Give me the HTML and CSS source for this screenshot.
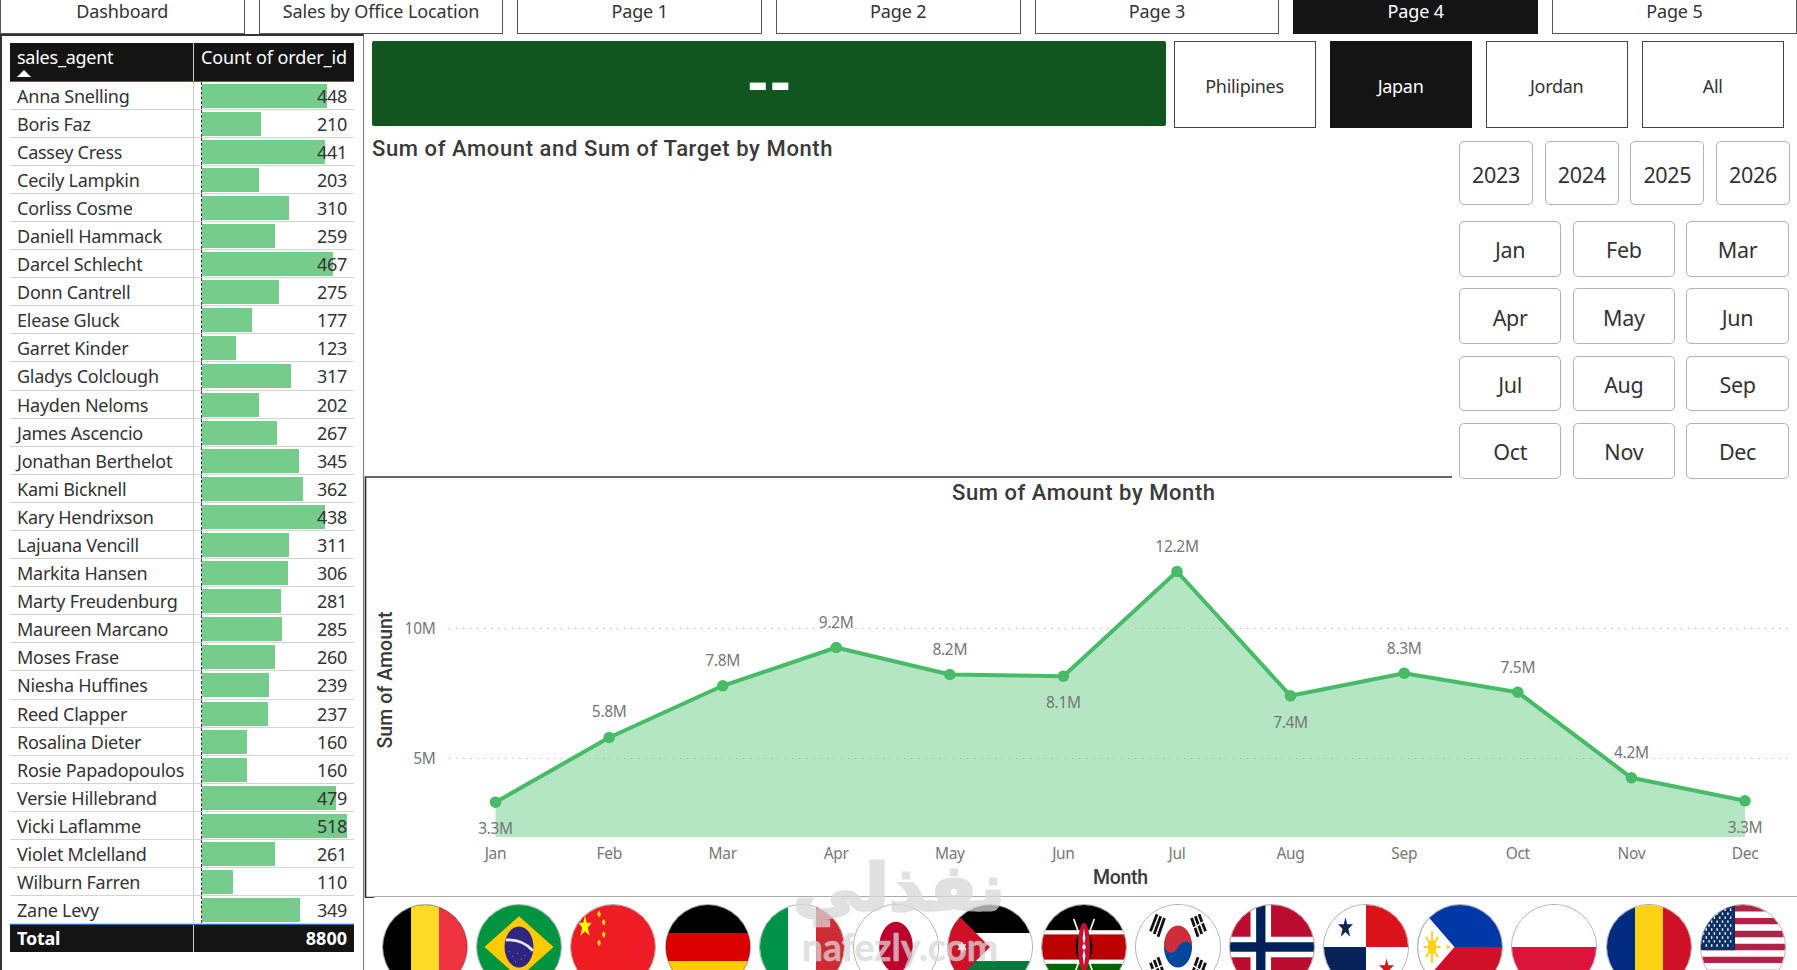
FILE: index.html
```html
<!DOCTYPE html>
<html lang="en">
<head>
  <meta charset="UTF-8" />
  <title>Sales Dashboard</title>
  <link rel="stylesheet" href="styles.css">
</head>
<body>
  <nav class="tabs">
    <a class="tab">Dashboard</a>
    <a class="tab">Sales by Office Location</a>
    <a class="tab">Page 1</a>
    <a class="tab">Page 2</a>
    <a class="tab">Page 3</a>
    <a class="tab active">Page 4</a>
    <a class="tab">Page 5</a>
  </nav>

  <div class="page">
    <aside class="agents">
      <div class="agents-head">
        <div class="name">sales_agent<span class="sort"></span></div>
        <div class="count">Count of order_id</div>
      </div>
      <div id="rows"></div>
      <div class="agents-total">
        <div class="name">Total</div>
        <div class="count">8800</div>
      </div>
    </aside>

    <main class="content">
      <div class="top-row">
        <div class="card">--</div>
        <div class="countries">
          <button class="country">Philipines</button>
          <button class="country active">Japan</button>
          <button class="country">Jordan</button>
          <button class="country">All</button>
        </div>
      </div>

      <div class="middle-row">
        <div class="combo-chart">
          <h2>Sum of Amount and Sum of Target by Month</h2>
        </div>
        <div class="slicers">
          <div class="years">
            <button>2023</button>
            <button>2024</button>
            <button>2025</button>
            <button>2026</button>
          </div>
          <div class="months">
            <button>Jan</button>
            <button>Feb</button>
            <button>Mar</button>
            <button>Apr</button>
            <button>May</button>
            <button>Jun</button>
            <button>Jul</button>
            <button>Aug</button>
            <button>Sep</button>
            <button>Oct</button>
            <button>Nov</button>
            <button>Dec</button>
          </div>
        </div>
      </div>

      <svg class="area-chart" width="1433" height="422" viewBox="364 476 1433 422">
        <path class="frame" d="M1452 477H365.5V897.5H374" />
        <path class="frame-light" d="M374 896.5H1797" />
        <text class="title" x="952" y="500" textLength="263">Sum of Amount by Month</text>
        <polygon class="area" points="495.5,837 495.5,802.2 609.2,737.5 722.7,685.8 836.2,647.5 949.8,674.5 1063.4,676.2 1177,571.5 1290.5,695.8 1404.2,673.2 1517.8,692.2 1631.4,777.8 1745,800.8 1745,837" />
        <path class="grid" d="M449 628.5H1788M449 758.5H1788" />
        <polyline class="line" points="495.5,802.2 609.2,737.5 722.7,685.8 836.2,647.5 949.8,674.5 1063.4,676.2 1177,571.5 1290.5,695.8 1404.2,673.2 1517.8,692.2 1631.4,777.8 1745,800.8" />
        <g class="dots">
          <circle cx="495.5" cy="802.2" r="5.8" />
          <circle cx="609.2" cy="737.5" r="5.8" />
          <circle cx="722.7" cy="685.8" r="5.8" />
          <circle cx="836.2" cy="647.5" r="5.8" />
          <circle cx="949.8" cy="674.5" r="5.8" />
          <circle cx="1063.4" cy="676.2" r="5.8" />
          <circle cx="1177" cy="571.5" r="5.8" />
          <circle cx="1290.5" cy="695.8" r="5.8" />
          <circle cx="1404.2" cy="673.2" r="5.8" />
          <circle cx="1517.8" cy="692.2" r="5.8" />
          <circle cx="1631.4" cy="777.8" r="5.8" />
          <circle cx="1745" cy="800.8" r="5.8" />
        </g>
        <g class="labels">
          <text x="495.5" y="834">3.3M</text>
          <text x="609.2" y="717">5.8M</text>
          <text x="722.7" y="666">7.8M</text>
          <text x="836.2" y="628">9.2M</text>
          <text x="949.8" y="654.5">8.2M</text>
          <text x="1063.4" y="708">8.1M</text>
          <text x="1177" y="551.5">12.2M</text>
          <text x="1290.5" y="727.5">7.4M</text>
          <text x="1404.2" y="653.5">8.3M</text>
          <text x="1517.8" y="672.5">7.5M</text>
          <text x="1631.4" y="758">4.2M</text>
          <text x="1745" y="833">3.3M</text>
        </g>
        <g class="axis">
          <text x="495.5" y="858.5">Jan</text>
          <text x="609.2" y="858.5">Feb</text>
          <text x="722.7" y="858.5">Mar</text>
          <text x="836.2" y="858.5">Apr</text>
          <text x="949.8" y="858.5">May</text>
          <text x="1063.4" y="858.5">Jun</text>
          <text x="1177" y="858.5">Jul</text>
          <text x="1290.5" y="858.5">Aug</text>
          <text x="1404.2" y="858.5">Sep</text>
          <text x="1517.8" y="858.5">Oct</text>
          <text x="1631.4" y="858.5">Nov</text>
          <text x="1745" y="858.5">Dec</text>
          <text class="end" x="435.5" y="634">10M</text>
          <text class="end" x="435.5" y="764">5M</text>
        </g>
        <text class="axis-title" x="1093" y="884" textLength="55">Month</text>
        <text class="axis-title" transform="translate(391.5 748.5) rotate(-90)" textLength="137">Sum of Amount</text>
      </svg>

      <div class="flags">
        <!-- Belgium -->
        <svg class="flag" viewBox="0 0 90 90">
          <rect width="90" height="90" fill="#000" />
          <rect x="30" width="30" height="90" fill="#fdda24" />
          <rect x="60" width="30" height="90" fill="#ef3340" />
        </svg>
        <!-- Brazil -->
        <svg class="flag" viewBox="0 0 90 90">
          <rect width="90" height="90" fill="#009440" />
          <path d="M45 12L82 45L45 78L8 45Z" fill="#ffcb00" />
          <ellipse cx="45" cy="45" rx="15.500" ry="22" fill="#302681" />
          <path d="M31 37.500Q48 36 60 49" fill="none" stroke="#dfe8f0" stroke-width="3" />
          <path d="M34 50h1M38 55h1M43 52h1M47 58h1M51 54h1M41 61h1" stroke="#aab" stroke-width="1" />
        </svg>
        <!-- China -->
        <svg class="flag" viewBox="0 0 90 90">
          <rect width="90" height="90" fill="#ee1c25" />
          <path d="M15 11L16.800 19H22L18 24.500L20 33L15 28L10 33L12 24.500L8 19H13.200Z" fill="#ff0" />
          <path d="M30 6l2 3-1 4-2-1-1-3zM35 15l2 3-1 4-2-1-1-3zM35 28l2 3-1 4-2-1-1-3zM30 37l2 3-1 4-2-1-1-3z" fill="#ffde00" />
        </svg>
        <!-- Germany -->
        <svg class="flag" viewBox="0 0 90 90">
          <rect width="90" height="90" fill="#000" />
          <rect y="30" width="90" height="30" fill="#d00" />
          <rect y="60" width="90" height="30" fill="#ffce00" />
        </svg>
        <!-- Italy -->
        <svg class="flag" viewBox="0 0 90 90">
          <rect width="90" height="90" fill="#fff" />
          <rect width="30" height="90" fill="#009246" />
          <rect x="60" width="30" height="90" fill="#ce2b37" />
        </svg>
        <!-- Japan -->
        <svg class="flag" viewBox="0 0 90 90">
          <rect width="90" height="90" fill="#fff" />
          <ellipse cx="45" cy="45" rx="18" ry="27" fill="#bc002d" />
        </svg>
        <!-- Jordan -->
        <svg class="flag" viewBox="0 0 90 90">
          <rect width="90" height="90" fill="#fff" />
          <rect width="90" height="30" fill="#000" />
          <rect y="60" width="90" height="30" fill="#007a3d" />
          <path d="M0 0L45 45L0 90Z" fill="#ce1126" />
          <path d="M15 39l1.500 3.500 3-1-1.500 3.500 2 3-3.500 0-1.500 4-1.500-4-3.500 0 2-3-1.500-3.500 3 1z" fill="#fff" />
        </svg>
        <!-- Kenya -->
        <svg class="flag" viewBox="0 0 90 90">
          <rect width="90" height="90" fill="#fff" />
          <rect width="90" height="27" fill="#000" />
          <rect y="31.500" width="90" height="27" fill="#b00" />
          <rect y="63" width="90" height="27" fill="#060" />
          <path d="M34 15L56 76M56 15L34 76" stroke="#fff" stroke-width="1.800" />
          <ellipse cx="45" cy="45" rx="9" ry="17" fill="#000" />
          <ellipse cx="45" cy="45" rx="6.500" ry="26" fill="#c8102e" />
          <path d="M45 25L46.500 36L45 42L43.500 36ZM45 48L46.500 54L45 65L43.500 54Z" fill="#fff" />
          <ellipse cx="45" cy="45" rx="1.800" ry="3" fill="#fff" />
        </svg>
        <!-- South Korea -->
        <svg class="flag" viewBox="0 0 90 90">
          <rect width="90" height="90" fill="#fff" />
          <ellipse cx="45" cy="45" rx="15" ry="22" fill="#0047a0" />
          <path d="M30 44A15 22 0 0 1 60 44C59 38 49 37 45 45C41 54 33 53 30 44Z" fill="#cd2e3a" />
          <g stroke="#111" stroke-width="3">
            <path d="M22.500 10L15.500 28M26.500 12L19.500 31M30.500 14L23.500 34" />
            <path d="M67.500 10L74.500 28M63.500 12L70.500 31M59.500 14L66.500 34" />
            <path d="M22.500 80L15.500 62M26.500 78L19.500 59M30.500 76L23.500 56" />
            <path d="M67.500 80L74.500 62M63.500 78L70.500 59M59.500 76L66.500 56" />
          </g>
          <path d="M61 25L74 17M61 65L74 73M16 70L30 64" stroke="#fff" stroke-width="1.500" />
        </svg>
        <!-- Norway -->
        <svg class="flag" viewBox="0 0 90 90">
          <rect width="90" height="90" fill="#ba0c2f" />
          <path d="M33 0V90M0 45H90" stroke="#fff" stroke-width="22" />
          <path d="M33 0V90M0 45H90" stroke="#00205b" stroke-width="10" />
        </svg>
        <!-- Panama -->
        <svg class="flag" viewBox="0 0 90 90">
          <rect width="90" height="90" fill="#fff" />
          <rect x="45" width="45" height="45" fill="#da121a" />
          <rect y="45" width="45" height="45" fill="#072357" />
          <path d="M23 13L24.800 20.500H31L26.200 25.500L28 34L23 29L18 34L19.800 25.500L15 20.500H21.200Z" fill="#072357" />
          <path d="M67 57L68.800 64.500H75L70.200 69.500L72 78L67 73L62 78L63.800 69.500L59 64.500H65.200Z" fill="#da121a" />
        </svg>
        <!-- Philippines -->
        <svg class="flag" viewBox="0 0 90 90">
          <rect width="90" height="45" fill="#0038a8" />
          <rect y="45" width="90" height="45" fill="#ce1126" />
          <path d="M0 0L39 45L0 90Z" fill="#fff" />
          <path d="M15 28V62M6 45H24M8.500 34L21.500 56M21.500 34L8.500 56" stroke="#fcd116" stroke-width="2" />
          <ellipse cx="15" cy="45" rx="4.500" ry="8" fill="#fcd116" />
          <path d="M31 42L34.500 45L31 48Z" fill="#fcd116" />
        </svg>
        <!-- Poland -->
        <svg class="flag" viewBox="0 0 90 90">
          <rect width="90" height="45" fill="#fff" />
          <rect y="45" width="90" height="45" fill="#dc143c" />
        </svg>
        <!-- Romania -->
        <svg class="flag" viewBox="0 0 90 90">
          <rect width="30" height="90" fill="#002b7f" />
          <rect x="30" width="30" height="90" fill="#fcd116" />
          <rect x="60" width="30" height="90" fill="#ce1126" />
        </svg>
        <!-- United States -->
        <svg class="flag" viewBox="0 0 90 90">
          <rect width="90" height="90" fill="#fff" />
          <path d="M0 3.500H90M0 17.300H90M0 31.100H90M0 45H90M0 58.800H90M0 72.700H90M0 86.500H90" stroke="#b22247" stroke-width="6.900" />
          <rect width="36.500" height="48.400" fill="#0a3161" />
          <path d="M2 5H36M2 13.500H36M2 22H36M2 30.500H36M2 39H36" stroke="#fff" stroke-width="2.600" stroke-dasharray="1.500 4.300" />
          <path d="M4.900 9.300H34M4.900 17.800H34M4.900 26.300H34M4.900 34.800H34M4.900 43.300H34" stroke="#fff" stroke-width="2.600" stroke-dasharray="1.500 4.300" />
        </svg>
      </div>
    </main>
  </div>

  <svg class="watermark" width="230" height="120" viewBox="785 850 230 120">
    <text class="wm-ar" x="899" y="910" textLength="212" lengthAdjust="spacingAndGlyphs">نفذلي</text>
    <text class="wm-en" x="900" y="961" textLength="196" lengthAdjust="spacingAndGlyphs">nafezly.com</text>
  </svg>

  <script>
    const agents = [
      ["Anna Snelling", 448], ["Boris Faz", 210], ["Cassey Cress", 441], ["Cecily Lampkin", 203],
      ["Corliss Cosme", 310], ["Daniell Hammack", 259], ["Darcel Schlecht", 467], ["Donn Cantrell", 275],
      ["Elease Gluck", 177], ["Garret Kinder", 123], ["Gladys Colclough", 317], ["Hayden Neloms", 202],
      ["James Ascencio", 267], ["Jonathan Berthelot", 345], ["Kami Bicknell", 362], ["Kary Hendrixson", 438],
      ["Lajuana Vencill", 311], ["Markita Hansen", 306], ["Marty Freudenburg", 281], ["Maureen Marcano", 285],
      ["Moses Frase", 260], ["Niesha Huffines", 239], ["Reed Clapper", 237], ["Rosalina Dieter", 160],
      ["Rosie Papadopoulos", 160], ["Versie Hillebrand", 479], ["Vicki Laflamme", 518], ["Violet Mclelland", 261],
      ["Wilburn Farren", 110], ["Zane Levy", 349]
    ];
    const maxCount = 518;

    document.getElementById("rows").innerHTML = agents.map(([name, count]) => `
      <div class="row">
        <div class="name">${name}</div>
        <div class="count"><div class="bar" style="width: ${(count / maxCount * 145).toFixed(1)}px"></div><span>${count}</span></div>
      </div>
    `).join("");
  </script>
</body>
</html>
```
FILE: styles.css
```css
* {
  box-sizing: border-box;
}

body {
  margin: 0;
  width: 1797px;
  height: 970px;
  overflow: hidden;
  background: #fefefe;
  font-family: "Noto Sans", "Open Sans", sans-serif;
  font-size: 18px;
  letter-spacing: -0.3px;
  color: #333;
}

button {
  font: inherit;
  letter-spacing: inherit;
  color: inherit;
  background: #fff;
  padding: 0;
}

/* page tabs */
.tabs {
  display: flex;
  gap: 14.2px;
  height: 34px;
}

.tab {
  flex: none;
  width: 244.5px;
  height: 34px;
  line-height: 23px;
  text-align: center;
  letter-spacing: -0.12px;
  background: #fff;
  border: 1.5px solid #555;
  border-top: none;
}

.tab.active,
.country.active {
  background: #141414;
  border-color: #141414;
  color: #fff;
}

.page {
  display: flex;
  height: 936px;
}

/* agents table */
.agents {
  flex: none;
  width: 364px;
  padding: 7px 9px 0 8px;
  background: #fff;
  border: 2px solid #333;
  border-right: 1.5px solid #777;
  border-bottom: none;
}

.agents-head,
.agents-total,
.row {
  display: flex;
}

.agents-head {
  height: 38.5px;
  background: #141414;
  border-bottom: 1.5px solid #1f6fc0;
  color: #fff;
  line-height: 28px;
}

.name {
  flex: none;
  width: 184px;
  padding-left: 7px;
  border-right: 1px solid #ccc;
  letter-spacing: -0.25px;
  white-space: nowrap;
}

.sort {
  display: block;
  width: 0;
  margin-top: -1px;
  border: 7px solid transparent;
  border-top: none;
  border-bottom: 7px solid #fff;
}

.agents-head .count {
  flex: 1;
  padding-right: 7px;
  letter-spacing: -0.1px;
  text-align: right;
}

.row {
  height: 28.1px;
  line-height: 28px;
  border-bottom: 1px solid #d3d3d3;
}

/* the number lies over the bar, both share one grid cell */
.row .count {
  flex: 1;
  display: grid;
  align-items: center;
  margin-left: 7px;
  padding-right: 7px;
  border-left: 1px dashed #333;
}

.bar,
.row .count span {
  grid-area: 1 / 1;
}

.bar {
  height: 24px;
  background: #76cd8b;
}

.row .count span {
  text-align: right;
}

.agents-total {
  height: 27.5px;
  line-height: 27px;
  background: #141414;
  border-top: 1px solid #1f6fc0;
  color: #fff;
  font-weight: bold;
}

.agents-total .count {
  flex: 1;
  padding-right: 7px;
  letter-spacing: 0;
  text-align: right;
}

/* right side */
.content {
  flex: 1;
  display: flex;
  flex-direction: column;
  min-width: 0;
}

.top-row {
  display: flex;
  gap: 8px;
  padding: 7px 0 0 7.5px;
}

.card {
  width: 794px;
  height: 85px;
  background: #10561e;
  border-radius: 2px;
  color: #fff;
  font: bold 52px/85px "DejaVu Sans", sans-serif;
  letter-spacing: 0.8px;
  text-indent: 2px;
  text-align: center;
}

.countries {
  display: flex;
  gap: 14.1px;
}

.country {
  width: 142px;
  height: 87px;
  padding-top: 2px;
  border: 1.5px solid #444;
}

.middle-row {
  display: flex;
  height: 348px;
}

h2 {
  margin: 0;
  font: 500 22px/26px Roboto, sans-serif;
  letter-spacing: 0.6px;
  color: #3a3a3a;
}

.combo-chart {
  width: 1095px;
  padding: 8px 0 0 8px;
}

.slicers {
  padding-top: 13px;
  font-size: 21.5px;
}

.slicers button {
  padding-top: 2px;
  border: 1px solid #b3b0ad;
  border-radius: 5px;
}

.years {
  display: flex;
  gap: 11.7px;
}

.years button {
  width: 74px;
  height: 64px;
}

.months {
  display: grid;
  grid-template-columns: repeat(3, 102.3px);
  gap: 11.6px 11.4px;
  margin-top: 16px;
}

.months button {
  height: 55.7px;
}

/* area chart */
.area-chart {
  flex: none;
  display: block;
}

.frame {
  fill: none;
  stroke: #333;
  stroke-width: 1.7;
}

.frame-light {
  stroke: #aaa;
}

.area {
  fill: #b5e6c3;
}

.grid {
  stroke: #b4bdb6;
  stroke-width: 1.2;
  stroke-dasharray: 1.5 5.5;
}

.line {
  fill: none;
  stroke: #47bb66;
  stroke-width: 4;
  stroke-linejoin: round;
}

.dots {
  fill: #47bb66;
}

.title,
.axis-title {
  font: 500 22px Roboto, sans-serif;
  letter-spacing: 0;
  fill: #3a3a3a;
}

.axis-title {
  font-size: 19.5px;
}

.labels,
.axis {
  font-size: 15.5px;
  text-anchor: middle;
  fill: #777;
}

.end {
  text-anchor: end;
}

/* flags */
.flags {
  display: flex;
  gap: 8.1px;
  padding: 6px 0 0 18.3px;
}

.flag {
  flex: none;
  width: 86px;
  height: 86px;
  border: 1px solid #aaa;
  border-radius: 50%;
}

.watermark {
  position: absolute;
  left: 785px;
  top: 850px;
}

.wm-ar,
.wm-en {
  text-anchor: middle;
  fill: #d8d8d8;
  stroke: #d8d8d8;
  opacity: 0.75;
  letter-spacing: 0;
}

.wm-ar {
  font: bold 64px "DejaVu Sans", sans-serif;
  stroke-width: 3;
}

.wm-en {
  font: bold 38px Lato, sans-serif;
  stroke-width: 0.5;
}
```
